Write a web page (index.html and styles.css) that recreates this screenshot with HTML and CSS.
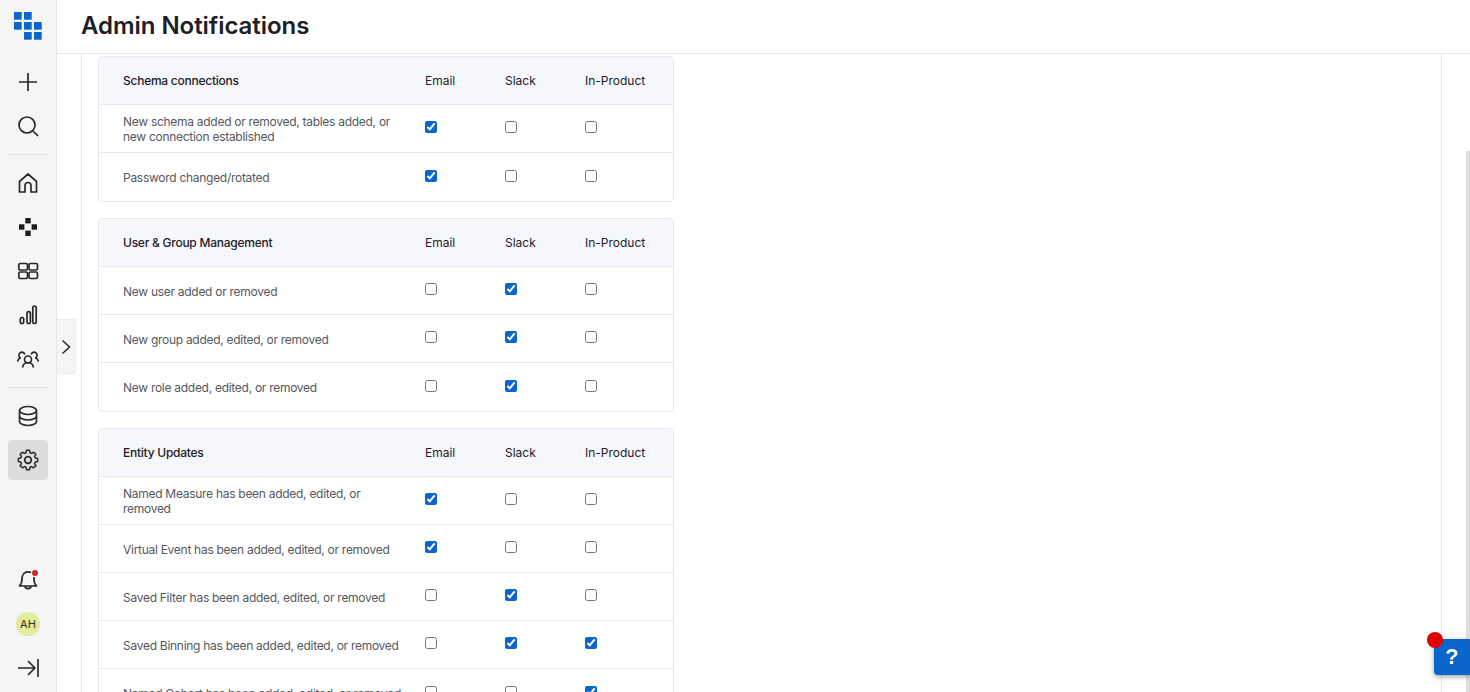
FILE: index.html
```html
<!DOCTYPE html>
<html lang="en">
<head>
<meta charset="utf-8">
<title>Admin Notifications</title>
<link rel="stylesheet" href="styles.css">
</head>
<body>
<div class="app">
  <nav class="sidebar">
    <div class="logo">
      <svg width="28" height="28" viewBox="0 0 28 28" fill="#0b66cc"><rect x="0" y="0" width="7.700" height="7.700"/><rect x="10" y="0" width="7.700" height="7.700"/><rect x="0" y="10" width="7.700" height="7.700"/><rect x="10" y="10" width="7.700" height="7.700"/><rect x="20" y="10" width="7.700" height="7.700"/><rect x="10" y="20" width="7.700" height="7.700"/><rect x="20" y="20" width="7.700" height="7.700"/></svg>
    </div>
    <div class="nav-group first">
      <a class="nav-item"><svg class="icon" viewBox="0 0 24 24"><path d="M12 3v18M3 12h18"/></svg></a>
      <a class="nav-item"><svg class="icon" viewBox="0 0 24 24"><circle cx="11" cy="11" r="8"/><path d="M17 17l5 5"/></svg></a>
    </div>
    <div class="divider"></div>
    <div class="nav-group">
      <a class="nav-item"><svg class="icon" viewBox="0 0 24 24"><path d="M3.500 21V10.500L12 3l8.500 7.500V21h-5.500v-6.500a3 3 0 0 0-6 0V21z"/></svg></a>
      <a class="nav-item"><svg class="icon" viewBox="0 0 24 24"><g class="solid"><rect x="9.300" y="3" width="5.400" height="5.400"/><rect x="3" y="9.300" width="5.400" height="5.400"/><rect x="15.600" y="9.300" width="5.400" height="5.400"/><rect x="9.300" y="15.600" width="5.400" height="5.400"/></g></svg></a>
      <a class="nav-item"><svg class="icon" viewBox="0 0 24 24"><rect x="2.800" y="4.500" width="8.700" height="6.500" rx="1.500"/><rect x="13" y="4.500" width="8.500" height="6.500" rx="1.500"/><rect x="2.800" y="13" width="8.700" height="6.500" rx="1.500"/><rect x="13" y="13" width="8.500" height="6.500" rx="1.500"/></svg></a>
      <a class="nav-item"><svg class="icon" viewBox="0 0 24 24"><rect x="4.300" y="14.500" width="3.400" height="6" rx="1.700"/><rect x="11" y="8.600" width="3.400" height="11.900" rx="1.700"/><rect x="16.800" y="3" width="3.400" height="17.500" rx="1.700"/></svg></a>
      <a class="nav-item"><svg class="icon" viewBox="0 0 24 24"><circle cx="12" cy="12.500" r="3.500"/><path d="M6.500 20.500c.5-3 2.800-5 5.500-5s5 2 5.500 5"/><path d="M8.800 7.500a3 3 0 1 0-4.300 3.400M1.500 14.500c.5-2 1.800-3.200 3.500-3.700M15.200 7.500a3 3 0 1 1 4.300 3.400M22.500 14.500c-.5-2-1.800-3.200-3.500-3.700"/></svg></a>
    </div>
    <div class="divider"></div>
    <div class="nav-group">
      <a class="nav-item"><svg class="icon" viewBox="0 0 24 24"><ellipse cx="12" cy="6.500" rx="8.500" ry="4"/><path d="M3.500 6.500v11c0 2.200 3.800 4 8.500 4s8.500-1.800 8.500-4v-11M3.500 12c0 2.200 3.800 4 8.500 4s8.500-1.800 8.500-4"/></svg></a>
      <a class="nav-item active"><svg class="icon" viewBox="0 0 24 24"><circle cx="12" cy="12" r="3.300"/><path d="M10.300 2.500h3.400l.6 2.700 1.800.8 2.400-1.400 2.400 2.400-1.400 2.400.8 1.800 2.700.6v3.400l-2.700.6-.8 1.800 1.400 2.400-2.400 2.400-2.400-1.400-1.800.8-.6 2.700h-3.400l-.6-2.700-1.800-.8-2.400 1.400-2.400-2.400 1.400-2.400-.8-1.800-2.700-.6v-3.400l2.700-.6.800-1.800-1.400-2.400 2.400-2.400 2.400 1.400 1.800-.8z" transform="translate(12 12) scale(.88) translate(-12 -13.500)"/></svg></a>
    </div>
    <div class="nav-group bottom">
      <a class="nav-item bell"><svg class="icon" viewBox="0 0 24 24"><path d="M15 4.500c-.8-.5-1.800-.7-3-.7-3.500 0-6 2.700-6 7.200 0 3.500-.5 5.200-2.500 7h17c-2-1.800-2.500-3.500-2.500-7v-2M9 18c0 3.500 6 3.500 6 0"/></svg><span class="dot"></span></a>
      <a class="nav-item"><span class="avatar">AH</span></a>
      <a class="nav-item"><svg class="icon" viewBox="0 0 24 24"><path d="M2 12h16M12 5l7 7-7 7M22 3v18"/></svg></a>
    </div>
  </nav>
  <div class="main">
    <header class="topbar"><h1>Admin Notifications</h1></header>
    <div class="content">
      <section class="card">
        <div class="row head"><span class="label">Schema connections</span><span>Email</span><span>Slack</span><span>In-Product</span></div>
        <div class="row"><span class="label">New schema added or removed, tables added, or new connection established</span><input type="checkbox" checked><input type="checkbox"><input type="checkbox"></div>
        <div class="row"><span class="label">Password changed/rotated</span><input type="checkbox" checked><input type="checkbox"><input type="checkbox"></div>
      </section>
      <section class="card">
        <div class="row head"><span class="label">User &amp; Group Management</span><span>Email</span><span>Slack</span><span>In-Product</span></div>
        <div class="row"><span class="label">New user added or removed</span><input type="checkbox"><input type="checkbox" checked><input type="checkbox"></div>
        <div class="row"><span class="label">New group added, edited, or removed</span><input type="checkbox"><input type="checkbox" checked><input type="checkbox"></div>
        <div class="row"><span class="label">New role added, edited, or removed</span><input type="checkbox"><input type="checkbox" checked><input type="checkbox"></div>
      </section>
      <section class="card">
        <div class="row head"><span class="label">Entity Updates</span><span>Email</span><span>Slack</span><span>In-Product</span></div>
        <div class="row"><span class="label">Named Measure has been added, edited, or removed</span><input type="checkbox" checked><input type="checkbox"><input type="checkbox"></div>
        <div class="row"><span class="label">Virtual Event has been added, edited, or removed</span><input type="checkbox" checked><input type="checkbox"><input type="checkbox"></div>
        <div class="row"><span class="label">Saved Filter has been added, edited, or removed</span><input type="checkbox"><input type="checkbox" checked><input type="checkbox"></div>
        <div class="row"><span class="label">Saved Binning has been added, edited, or removed</span><input type="checkbox"><input type="checkbox" checked><input type="checkbox" checked></div>
        <div class="row"><span class="label">Named Cohort has been added, edited, or removed</span><input type="checkbox"><input type="checkbox"><input type="checkbox" checked></div>
      </section>
    </div>
    <button class="expander" aria-label="Expand"><svg width="10" height="16" viewBox="0 0 10 16"><path d="M1.500 1.500L8.500 8l-7 6.500"/></svg></button>
  </div>
</div>
<div class="scroll-thumb"></div>
<button class="help">?</button>
<span class="help-dot"></span>
</body>
</html>
```

FILE: styles.css
```css
* { box-sizing: border-box; }
html, body { margin: 0; height: 100%; overflow: hidden; }
body { font-family: Inter, "Liberation Sans", sans-serif; color: #1d2026; background: #fff; }

.app { display: flex; height: 692px; }

.sidebar {
  width: 57px; flex: none; display: flex; flex-direction: column;
  background: #f5f5f5; border-right: 1px solid #e6e6e8;
}
.logo { height: 53px; display: flex; align-items: center; justify-content: center; padding-bottom: 2px; }
.nav-group { display: flex; flex-direction: column; }
.nav-group.first { margin-top: 7px; }
.nav-group.bottom { margin-top: auto; margin-bottom: 2px; }
.nav-item { height: 44px; width: 40px; margin: 0 8px; display: flex; align-items: center; justify-content: center; position: relative; }
.nav-item.active { background: #dcdcdc; border-radius: 4px; height: 40px; margin-top: 2px; margin-bottom: 2px; }
.icon { width: 24px; height: 24px; fill: none; stroke: #26282c; stroke-width: 1.700; stroke-linejoin: round; }
.icon .solid { fill: #1a1c20; stroke: none; }
.divider { height: 1px; background: #e4e4e6; margin: 6px 8px; }
.dot { position: absolute; width: 6px; height: 6px; border-radius: 50%; background: #d0282e; top: 12px; left: 24px; }
.avatar { width: 24px; height: 24px; border-radius: 50%; background: #e3eb9c; color: #30331c; font-size: 11px; display: flex; align-items: center; justify-content: center; }

.main { flex: 1; min-width: 0; display: flex; flex-direction: column; position: relative; }
.topbar { height: 54px; flex: none; display: flex; align-items: center; padding: 0 0 3px 24px; border-bottom: 1px solid #e6e6e8; }
h1 { margin: 0; font-size: 24px; font-weight: 600; letter-spacing: -.05px; color: #1d2026; }

.content {
  flex: 1; min-height: 0; overflow: hidden; margin: 0 28px 0 24px; padding: 2px 16px 0;
  border-left: 1px solid #e6e6e8; border-right: 1px solid #e6e6e8;
  display: flex; flex-direction: column; gap: 16px;
}
.card { flex: none; width: 576px; border: 1px solid #e6e8ec; border-radius: 4px; overflow: hidden; background: #fff; }
.row {
  display: grid; grid-template-columns: 302px 80px 80px 1fr; align-items: center;
  min-height: 48px; padding-left: 24px; font-size: 12px; line-height: 15px; color: #55585e;
  border-top: 1px solid #e6e8ec;
}
.row:last-child { min-height: 49px; }
.row.head { background: #f5f7fc; color: #1d2026; border-top: 0; min-height: 47px; }
.row.head .label { font-weight: 500; letter-spacing: -.25px; padding-top: 0; }
.label { padding: 1px 20px 0 0; letter-spacing: -.28px; }
.row input { margin: 0 0 3px; width: 12px; height: 12px; accent-color: #0b66cc; }

.expander {
  position: absolute; left: 0; top: 319px; width: 19px; height: 55px; padding: 0 0 0 4px;
  display: flex; align-items: center; justify-content: flex-start;
  background: #f5f5f5; border: 1px solid #ececee; border-left: 0; border-radius: 0 3px 3px 0;
}
.expander svg { fill: none; stroke: #26282c; stroke-width: 1.500; }

.scroll-thumb { position: fixed; right: 0; top: 151px; bottom: 0; width: 4px; background: #dedede; }
.help {
  position: fixed; left: 1434px; top: 639px; width: 36px; height: 36px; padding: 0; border: 0;
  border-radius: 4px 0 0 4px; background: #0b66cc; color: #fff;
  font: 700 22px "Liberation Sans", sans-serif; box-shadow: 0 2px 5px rgba(0,0,0,.35);
}
.help-dot { position: fixed; left: 1427px; top: 632px; width: 16px; height: 16px; border-radius: 50%; background: #e00000; }
```
